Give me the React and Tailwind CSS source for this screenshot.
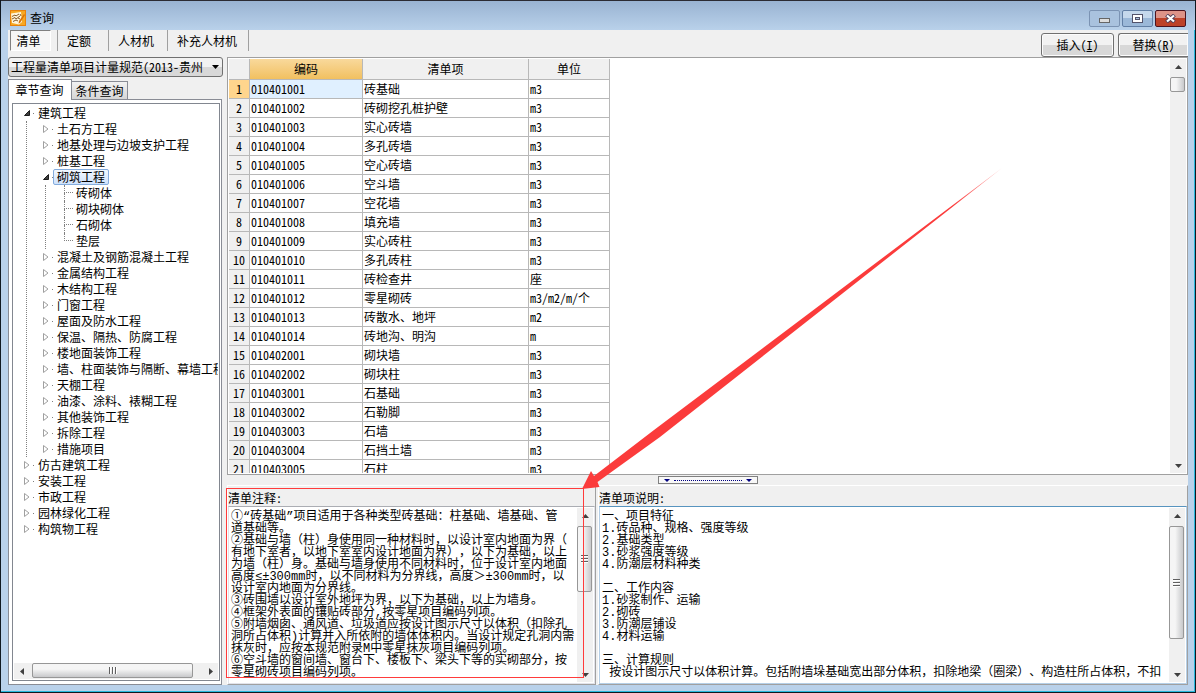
import React from "react";
import clsx from "clsx";

const tabs = [
  { label: "清单", width: "w-[50px]" },
  { label: "定额", width: "w-[51px]" },
  { label: "人材机", width: "w-[59px]" },
  { label: "补充人材机", width: "w-[81px]" },
];

const tree = [
  {
    label: "建筑工程",
    open: true,
    children: [
      { label: "土石方工程" },
      { label: "地基处理与边坡支护工程" },
      { label: "桩基工程" },
      {
        label: "砌筑工程",
        open: true,
        selected: true,
        leaves: ["砖砌体", "砌块砌体", "石砌体", "垫层"],
      },
      { label: "混凝土及钢筋混凝土工程" },
      { label: "金属结构工程" },
      { label: "木结构工程" },
      { label: "门窗工程" },
      { label: "屋面及防水工程" },
      { label: "保温、隔热、防腐工程" },
      { label: "楼地面装饰工程" },
      { label: "墙、柱面装饰与隔断、幕墙工程" },
      { label: "天棚工程" },
      { label: "油漆、涂料、裱糊工程" },
      { label: "其他装饰工程" },
      { label: "拆除工程" },
      { label: "措施项目" },
    ],
  },
  { label: "仿古建筑工程" },
  { label: "安装工程" },
  { label: "市政工程" },
  { label: "园林绿化工程" },
  { label: "构筑物工程" },
];

const items = [
  ["010401001", "砖基础", "m3"],
  ["010401002", "砖砌挖孔桩护壁", "m3"],
  ["010401003", "实心砖墙", "m3"],
  ["010401004", "多孔砖墙", "m3"],
  ["010401005", "空心砖墙", "m3"],
  ["010401006", "空斗墙", "m3"],
  ["010401007", "空花墙", "m3"],
  ["010401008", "填充墙", "m3"],
  ["010401009", "实心砖柱", "m3"],
  ["010401010", "多孔砖柱", "m3"],
  ["010401011", "砖检查井", "座"],
  ["010401012", "零星砌砖", "m3/m2/m/个"],
  ["010401013", "砖散水、地坪", "m2"],
  ["010401014", "砖地沟、明沟", "m"],
  ["010402001", "砌块墙", "m3"],
  ["010402002", "砌块柱", "m3"],
  ["010403001", "石基础", "m3"],
  ["010403002", "石勒脚", "m3"],
  ["010403003", "石墙", "m3"],
  ["010403004", "石挡土墙", "m3"],
  ["010403005", "石柱", "m3"],
];

const noteText = `①“砖基础”项目适用于各种类型砖基础：柱基础、墙基础、管
道基础等。
②基础与墙（柱）身使用同一种材料时，以设计室内地面为界（
有地下室者，以地下室室内设计地面为界），以下为基础，以上
为墙（柱）身。基础与墙身使用不同材料时，位于设计室内地面
高度≤±300mm时，以不同材料为分界线，高度＞±300mm时，以
设计室内地面为分界线。
③砖围墙以设计室外地坪为界，以下为基础，以上为墙身。
④框架外表面的镶贴砖部分,按零星项目编码列项。
⑤附墙烟囱、通风道、垃圾道应按设计图示尺寸以体积（扣除孔
洞所占体积)计算并入所依附的墙体体积内。当设计规定孔洞内需
抹灰时，应按本规范附录M中零星抹灰项目编码列项。
⑥空斗墙的窗间墙、窗台下、楼板下、梁头下等的实砌部分，按
零星砌砖项目编码列项。`;

const descText = `一、项目特征
1.砖品种、规格、强度等级
2.基础类型
3.砂浆强度等级
4.防潮层材料种类

二、工作内容
1.砂浆制作、运输
2.砌砖
3.防潮层铺设
4.材料运输

三、计算规则
 按设计图示尺寸以体积计算。包括附墙垛基础宽出部分体积，扣除地梁（圈梁）、构造柱所占体积，不扣`;

function AppIcon() {
  return (
    <svg className="h-4 w-4" viewBox="0 0 16 16">
      <rect width="16" height="16" fill="#e8820c" />
      <rect x="1" y="1" width="14" height="14" fill="#f7a823" />
      <path d="M1 3.500 11 2l1 10-3 2.500-7-1.500z" fill="#fff6dc" />
      <path d="M2 6.500 5 5l1 1 3-2M2 9l3-1.500L6 9l4-3M3 11.500 6 10l2 1M10 4l1 2M8 8l2 1" stroke="#7a4a14" strokeWidth=".9" fill="none" />
      <path d="M8.500 13.500 9 11l5-7 1 1-5 8z" fill="#d9730a" />
    </svg>
  );
}

function Triangle({ open }) {
  return open ? (
    <svg className="h-2 w-2" viewBox="0 0 8 8">
      <path d="M6.500 1.500v5h-5z" fill="#404040" stroke="#1c1c1c" />
    </svg>
  ) : (
    <svg className="h-2 w-2" viewBox="0 0 8 8">
      <path d="M1.500 .5v7L6 4z" fill="#fff" stroke="#a0a0a0" />
    </svg>
  );
}

const arrowPaths = {
  up: "M0 5h7L3.5 1z",
  down: "M0 2h7L3.5 6z",
  left: "M5 0v7L1 3.5z",
  right: "M2 0v7l4-3.5z",
};

function ScrollArrow({ dir }) {
  return (
    <button type="button" aria-label={dir} className="flex h-4 w-4 shrink-0 items-center justify-center">
      <svg className="h-[7px] w-[7px]" viewBox="0 0 7 7">
        <path d={arrowPaths[dir]} fill="#404040" />
      </svg>
    </button>
  );
}

function Grip({ horizontal }) {
  return (
    <span className={clsx("flex justify-between", horizontal ? "h-[7px] w-2" : "h-2 w-[7px] flex-col")}>
      {[0, 1, 2].map((n) => (
        <span key={n} className={horizontal ? "w-[2px] border-r border-white bg-[#606060]" : "h-[2px] border-b border-white bg-[#606060]"} />
      ))}
    </span>
  );
}

function VScroll({ thumb, grip = true }) {
  return (
    <div className="flex w-4 shrink-0 flex-col bg-[#f0f0f0]">
      <ScrollArrow dir="up" />
      <div className="min-h-0 flex-1 pt-[2px]">
        <div
          className={clsx(
            "flex w-[15px] items-center justify-center rounded-xs border border-[#979797] bg-linear-to-r from-[#f5f5f5] from-40% to-[#c8c9cb]",
            thumb
          )}
        >
          {grip && <Grip />}
        </div>
      </div>
      <ScrollArrow dir="down" />
    </div>
  );
}

function TitleBar() {
  const button = "flex h-[17px] w-[31px] items-center justify-center rounded-xs border";
  return (
    <header className="flex h-[30px] shrink-0 items-start justify-between border-t border-[#2b2b33] bg-linear-to-b from-[#99b3d2] to-[#b9d1ea] pt-[9px] pr-[9px] pl-[9px]">
      <div className="flex items-center gap-1">
        <AppIcon />
        <h1>查询</h1>
      </div>
      <div className="flex gap-[2px]">
        <button type="button" aria-label="最小化" className={clsx(button, "border-[#7b93b3] bg-[#a9c2de]")}>
          <span className="mt-1 h-[5px] w-[11px] border border-[#666] bg-[#ddd]" />
        </button>
        <button type="button" aria-label="最大化" className={clsx(button, "border-[#627fa5] bg-linear-to-b from-[#c5d8ec] from-50% to-[#9bb8d8] to-50%")}>
          <span className="flex h-[9px] w-[11px] items-center justify-center border border-[#53536b] bg-white">
            <span className="h-[3px] w-[5px] border border-[#53536b] bg-[#a9c2de]" />
          </span>
        </button>
        <button type="button" aria-label="关闭" className={clsx(button, "border-[#4b1420] bg-linear-to-b from-[#dd9388] from-50% to-[#bd4229] to-50%")}>
          <svg className="h-[9px] w-[11px]" viewBox="0 0 11 9">
            <path d="M1.500 1 9.500 8M9.500 1 1.500 8" stroke="#55425a" strokeWidth="4" />
            <path d="M2 1.500 9 7.500M9 1.500 2 7.500" stroke="#fff" strokeWidth="2.2" />
          </svg>
        </button>
      </div>
    </header>
  );
}

function ToolBar() {
  const button = "h-6 rounded-[3px] border border-[#707070] bg-linear-to-b from-[#f2f2f2] from-50% to-[#d8d8d8] to-50% shadow-[inset_0_0_0_1px_#fcfcfc]";
  return (
    <div className="flex h-[27px] shrink-0 justify-between">
      <nav className="flex items-start">
        {tabs.map(({ label, width }, i) => (
          <div key={label} className={clsx("flex h-[21px] border-r border-[#a0a0a0]", width, i ? "pl-[9px]" : "pl-[2px]")}>
            <button
              type="button"
              className={clsx(
                "h-[21px]",
                i === 0 && "w-[41px] border border-t-[#808080] border-r-white border-b-white border-l-[#808080] bg-[#f6f6f6] pr-1"
              )}
            >
              {label}
            </button>
          </div>
        ))}
      </nav>
      <div className="flex items-start gap-1 overflow-hidden pt-[3px]">
        <button type="button" className={clsx(button, "w-[73px]")}>
          插入(<u>I</u>)
        </button>
        <button type="button" className={clsx(button, "w-[70px] rounded-r-none border-r-0")}>
          替换(<u>R</u>)
        </button>
      </div>
    </div>
  );
}

function TreeRow({ node, indent }) {
  return (
    <div className={clsx("flex h-4 items-center", indent)}>
      <button type="button" aria-label={node.label} className="flex w-[8px] shrink-0 justify-center">
        <Triangle open={node.open} />
      </button>
      <span className="h-px w-[3px] shrink-0 border-r border-[#808080]" />
      <span
        className={clsx(
          "h-4 rounded-xs border px-[3px] leading-[14px]",
          node.selected ? "border-[#84acdd] bg-linear-to-b from-[#f3f8fe] to-[#cfe2fc]" : "border-transparent"
        )}
      >
        {node.label}
      </span>
    </div>
  );
}

function Tree() {
  return (
    <ul className="min-h-0 flex-1 overflow-hidden whitespace-nowrap">
      {tree.map((root) => (
        <li key={root.label}>
          <TreeRow node={root} indent="pl-[9px]" />
          {root.children && (
            <ul className="ml-[12px] border-l border-dotted border-[#808080]">
              {root.children.map((node) => (
                <li key={node.label}>
                  <TreeRow node={node} indent="pl-[15px]" />
                  {node.leaves && (
                    <ul className="ml-[18px] border-l border-dotted border-[#808080]">
                      {node.leaves.map((leaf, i) => (
                        <li key={leaf} className="flex h-4 items-center pl-[18px]">
                          <span className="flex h-4 w-[9px] flex-col">
                            <span className="h-2 border-b border-l border-dotted border-[#808080]" />
                            {i < node.leaves.length - 1 && <span className="h-2 border-l border-dotted border-[#808080]" />}
                          </span>
                          <span className="pl-[3px] leading-[14px]">{leaf}</span>
                        </li>
                      ))}
                    </ul>
                  )}
                </li>
              ))}
            </ul>
          )}
        </li>
      ))}
    </ul>
  );
}

function Sidebar() {
  return (
    <aside className="flex w-[219px] shrink-0 flex-col">
      <div className="relative mr-1">
        <select
          aria-label="计量规范"
          className="block h-5 w-full appearance-none rounded-[3px] border border-[#707070] bg-linear-to-b from-[#f2f2f2] from-50% to-[#d8d8d8] to-50% pl-[2px] leading-[18px]"
        >
          <option>工程量清单项目计量规范(2013-贵州</option>
        </select>
        <svg className="pointer-events-none absolute top-2 right-1 h-1 w-[7px]" viewBox="0 0 7 4">
          <path d="M0 0h7L3.500 4z" fill="#000" />
        </svg>
      </div>
      <div className="flex items-end pt-[2px]">
        <button type="button" className="relative -mb-px h-[21px] w-16 border border-b-0 border-[#898c95] bg-white pr-px">
          章节查询
        </button>
        <button type="button" className="h-[18px] w-[56px] border border-b-0 border-l-0 border-[#898c95] bg-linear-to-b from-[#f2f2f2] to-[#d6d6d6]">
          条件查询
        </button>
      </div>
      <div className="mr-[5px] flex min-h-0 flex-1 flex-col border border-[#898c95] bg-white py-[3px] pr-px pl-[3px]">
        <div className="flex min-h-0 flex-1 flex-col border border-[#828790] p-px">
          <Tree />
          <div className="flex h-4 shrink-0 bg-[#f0f0f0]">
            <ScrollArrow dir="left" />
            <div className="min-w-0 flex-1 pl-[2px]">
              <div className="flex h-[15px] w-[161px] items-center justify-center rounded-xs border border-[#979797] bg-linear-to-b from-[#f5f5f5] from-40% to-[#c8c9cb]">
                <Grip horizontal />
              </div>
            </div>
            <ScrollArrow dir="right" />
          </div>
        </div>
      </div>
    </aside>
  );
}

function ItemTable() {
  const head = "border-r border-b border-[#b8b8b8] bg-[#f0f0f0] p-0 font-normal";
  const cell = "border-r border-b border-[#b8b8b8] p-0 pl-px";
  return (
    <div className="flex min-h-0 flex-1 border border-[#a0a0a0] bg-white p-px">
      <div className="min-w-0 flex-1 overflow-hidden">
        <table className="w-[381px] table-fixed border-separate border-spacing-0">
          <colgroup>
            <col className="w-[21px]" />
            <col className="w-[113px]" />
            <col className="w-[166px]" />
            <col className="w-[81px]" />
          </colgroup>
          <thead>
            <tr className="h-[21px]">
              <th className={head} aria-label="序号" />
              <th className="border-r border-b border-[#b8b8b8] bg-linear-to-b from-[#f9d99b] to-[#f1c05f] p-0 font-normal">编码</th>
              <th className={head}>清单项</th>
              <th className={head}>单位</th>
            </tr>
          </thead>
          <tbody>
            {items.map(([code, name, unit], i) => (
              <tr key={code} className="h-[19px]">
                <th className={clsx("border-r border-b border-[#b8b8b8] p-0 font-normal", i ? "bg-[#f0f0f0]" : "bg-[#ffd58d]")}>{i + 1}</th>
                <td className={clsx(cell, i === 0 && "bg-[#e0f0ff]")}>{code}</td>
                <td className={cell}>{name}</td>
                <td className={cell}>{unit}</td>
              </tr>
            ))}
          </tbody>
        </table>
      </div>
      <VScroll thumb="h-[15px]" grip={false} />
    </div>
  );
}

function Splitter() {
  return (
    <div className="flex h-[10px] shrink-0 items-center justify-center">
      <div className="flex h-2 w-[100px] items-center justify-between border border-[#808080] bg-[#f8f8f8] px-[5px]">
        <svg className="h-[3px] w-[6px]" viewBox="0 0 6 3">
          <path d="M0 0h6L3 3z" fill="#000080" />
        </svg>
        <span className="w-[68px] border-t border-dotted border-[#000080]" />
        <svg className="h-[3px] w-[6px]" viewBox="0 0 6 3">
          <path d="M0 0h6L3 3z" fill="#000080" />
        </svg>
      </div>
    </div>
  );
}

function TextPanel({ id, label, text, thumb, focused, className, children }) {
  return (
    <section className={clsx("relative flex flex-col border border-t-white border-r-[#a0a0a0] border-b-[#a0a0a0] border-l-white", className)}>
      <label htmlFor={id} className="h-5 pt-1 leading-4">
        {label}
      </label>
      <div
        className={clsx(
          "flex min-h-0 flex-1 border bg-white p-px",
          focused ? "border-[#b5cfe7] border-t-[#5794bf]" : "border-[#e2e3ea] border-t-[#abadb3]"
        )}
      >
        <textarea
          id={id}
          readOnly
          value={text}
          wrap="off"
          className="min-w-0 flex-1 resize-none overflow-hidden pt-[3px] pl-px font-['Liberation_Mono','Noto_Sans_CJK_SC',monospace] leading-3 outline-none [font-feature-settings:normal] [text-spacing-trim:space-all]"
        />
        <VScroll thumb={thumb} />
      </div>
      {children}
    </section>
  );
}

function Annotation() {
  return (
    <>
      <div className="pointer-events-none absolute top-[2px] right-[11px] bottom-[6px] -left-[2px] border border-[#ff3b3b]" />
      <svg className="pointer-events-none absolute right-[-407px] bottom-[195px] h-[322px] w-[420px]" viewBox="0 0 420 322">
        <defs>
          <linearGradient id="shaft" x1="0" y1="1" x2="1" y2="0">
            <stop offset="0.88" stopColor="#fb3b3b" />
            <stop offset="1" stopColor="#fb3b3b" stopOpacity="0.4" />
          </linearGradient>
        </defs>
        <path d="M0 322 9 304l3 5L72 263 420 1 78 270 15.500 315l2 5z" fill="url(#shaft)" />
      </svg>
    </>
  );
}

export default function App() {
  return (
    <div className="flex h-screen flex-col overflow-hidden border-x border-b border-[#101820] bg-[#b9d1ea] font-['Noto_Sans_CJK_SC','Liberation_Sans',sans-serif] text-[12px] leading-4 text-black [font-feature-settings:'hwid']">
      <TitleBar />
      <main className="flex min-h-0 flex-1 flex-col border-r border-b border-[#28b8dc] pr-[6px] pb-[6px] pl-[7px]">
        <div className="flex min-h-0 flex-1 flex-col bg-[#f0f0f0]">
          <ToolBar />
          <div className="flex min-h-0 flex-1">
            <Sidebar />
            <div className="flex min-w-0 flex-1 flex-col">
              <ItemTable />
              <Splitter />
              <div className="flex h-[200px] shrink-0 gap-[2px]">
                <TextPanel id="note" label="清单注释:" text={noteText} thumb="h-[66px]" className="z-10 w-[369px] shrink-0">
                  <Annotation />
                </TextPanel>
                <TextPanel id="desc" label="清单项说明:" text={descText} thumb="h-[113px]" focused className="min-w-0 flex-1" />
              </div>
            </div>
          </div>
        </div>
      </main>
    </div>
  );
}
